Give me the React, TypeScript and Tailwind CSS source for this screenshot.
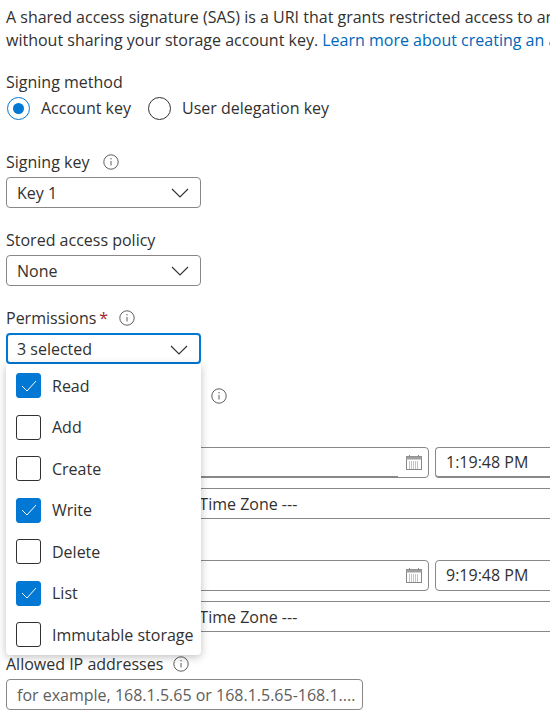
import * as React from "react";

const Chevron = () => (
  <svg width="18" height="10" viewBox="0 0 18 10" fill="none" stroke="#323130" strokeWidth="1.1" className="absolute right-[11px] top-[10px]">
    <path d="M1 1l8 8 8-8" />
  </svg>
);

const Info = ({ className = "" }: { className?: string }) => (
  <svg width="16" height="16" viewBox="0 0 16 16" fill="none" className={className}>
    <circle cx="8" cy="8" r="7.2" stroke="#605e5c" strokeWidth="1" />
    <path d="M8 7v4.5" stroke="#605e5c" strokeWidth="1" />
    <circle cx="8" cy="4.8" r="0.7" fill="#605e5c" />
  </svg>
);

const Calendar = () => (
  <svg width="16" height="15" viewBox="0 0 16 15" fill="none" className="absolute right-[6px] top-[7px]">
    <rect x="0.5" y="1.5" width="15" height="13" fill="#fff" stroke="#8a8886" />
    <rect x="0.5" y="1.5" width="15" height="3" fill="#a19f9d" />
    <path d="M3.5 0v2M12.5 0v2" stroke="#8a8886" />
    <path d="M3 7h10M3 9h10M3 11h10M3 13h10" stroke="#8a8886" strokeDasharray="1 1" />
  </svg>
);

const Select = ({ value, focused = false }: { value: string; focused?: boolean }) => (
  <div
    className={`relative h-[31px] w-[195px] rounded-sm ${
      focused ? "border-2 border-[#0078d4] pl-[9px] leading-[29px]" : "border border-[#8a8886] pl-[10px] leading-[31px]"
    }`}
  >
    {value}
    <Chevron />
  </div>
);

const Label = ({ children }: { children: React.ReactNode }) => (
  <div className="flex h-[24px] items-center">{children}</div>
);

const Radio = ({ on, label }: { on?: boolean; label: string }) => (
  <div className="flex items-center gap-[11px]">
    <span
      className={`flex h-[23px] w-[23px] items-center justify-center rounded-full border ${
        on ? "border-[#0078d4]" : "border-[#323130]"
      }`}
    >
      {on && <span className="h-[11px] w-[11px] rounded-full bg-[#0078d4]" />}
    </span>
    {label}
  </div>
);

const DateRow = ({ time, underline }: { time: string; underline?: boolean }) => (
  <div className="flex gap-[6px]">
    <div className="relative h-[31px] w-[423px] shrink-0 rounded-sm border border-[#8a8886]">
      {underline && <div className="absolute bottom-[-1px] left-0 h-[2px] w-[391px] bg-[#8a8886]" />}
      <Calendar />
    </div>
    <div
      className={`h-[31px] w-[200px] shrink-0 rounded-sm border border-[#8a8886] pl-[10px] leading-[29px] ${
        underline ? "border-b-2" : ""
      }`}
    >
      {time}
    </div>
  </div>
);

const Zone = () => (
  <div className="mt-[10px] h-[31px] w-[640px] rounded-sm border border-[#8a8886] pl-[21px] leading-[31px]">
    (UTC-07:00) --- Current Time Zone ---
  </div>
);

const permissions = [
  { name: "Read", on: true },
  { name: "Add", on: false },
  { name: "Create", on: false },
  { name: "Write", on: true },
  { name: "Delete", on: false },
  { name: "List", on: true },
  { name: "Immutable storage", on: false },
];

export default function App() {
  return (
    <div className="relative h-[716px] w-[550px] overflow-hidden bg-white pl-[6px] pt-[6px] font-['Open_Sans',sans-serif] text-[16px] text-[#323130]">
      <div className="w-[700px] whitespace-nowrap leading-[23px]">
        <p>A shared access signature (SAS) is a URI that grants restricted access to an Azure Storage resource</p>
        <p>
          without sharing your storage account key.{" "}
          <span className="text-[#0067b8]">Learn more about creating an account SAS</span>
        </p>
      </div>

      <div className="mt-[18px]">
        <Label>Signing method</Label>
        <div className="mt-[2px] flex h-[24px] items-center gap-[17px] pl-[1px]">
          <Radio on label="Account key" />
          <Radio label="User delegation key" />
        </div>
      </div>

      <div className="mt-[30px]">
        <Label>
          Signing key <Info className="ml-[14px]" />
        </Label>
        <div className="mt-[3px]">
          <Select value="Key 1" />
        </div>
      </div>

      <div className="mt-[20px]">
        <Label>Stored access policy</Label>
        <div className="mt-[3px]">
          <Select value="None" />
        </div>
      </div>

      <div className="mt-[20px]">
        <Label>
          Permissions <span className="ml-[3px] text-[#a4262c]">*</span> <Info className="ml-[11px]" />
        </Label>
        <div className="mt-[3px]">
          <Select value="3 selected" focused />
        </div>
      </div>

      <div className="mt-[20px]">
        <Label>
          Start and expiry date/time <Info className="ml-[10px]" />
        </Label>
      </div>

      <div className="mt-[39px]">
        <DateRow time="1:19:48 PM" underline />
        <Zone />
      </div>

      <div className="mt-[41px]">
        <DateRow time="9:19:48 PM" />
        <Zone />
      </div>

      <div className="mt-[20px]">
        <Label>
          Allowed IP addresses <Info className="ml-[10px]" />
        </Label>
        <div className="mt-[3px] flex h-[31px] w-[357px] items-center rounded-sm border border-[#8a8886] pl-[10px] text-[#605e5c]">
          for example, 168.1.5.65 or 168.1.5.65-168.1....
        </div>
      </div>

      {/* permissions dropdown, sits over the form */}
      <div className="absolute left-[6px] top-[364px] h-[291px] w-[195px] rounded-b-sm bg-white pl-[10px] pt-[1px] shadow-[0_2px_8px_rgba(0,0,0,0.25)]">
        {permissions.map((p) => (
          <div key={p.name} className="flex h-[41.5px] items-center gap-[11px] whitespace-nowrap">
            <span
              className={`flex h-[25px] w-[25px] items-center justify-center rounded-[3px] border ${
                p.on ? "border-[#0078d4] bg-[#0078d4]" : "border-[#323130] bg-white"
              }`}
            >
              {p.on && (
                <svg width="16" height="12" viewBox="0 0 16 12" fill="none" stroke="#fff" strokeWidth="1">
                  <path d="M1 6l5 5 9-10" />
                </svg>
              )}
            </span>
            {p.name}
          </div>
        ))}
      </div>
    </div>
  );
}
